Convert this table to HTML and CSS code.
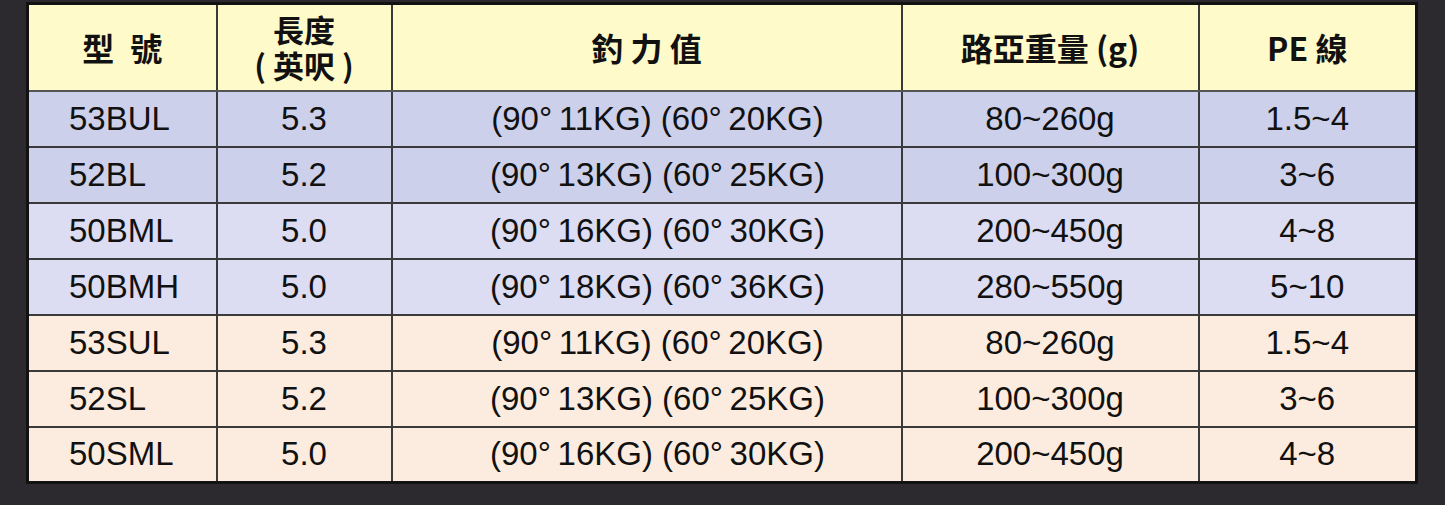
FILE: index.html
```html
<!DOCTYPE html>
<html lang="zh-Hant">
<head>
<meta charset="utf-8">
<link rel="stylesheet" href="styles.css">
</head>
<body>
<table class="spec">
  <colgroup>
    <col class="c1"><col class="c2"><col class="c3"><col class="c4"><col class="c5">
  </colgroup>
  <thead>
    <tr class="head">
      <th>型&ensp;號</th>
      <th class="two">長度<br>(&nbsp;英呎&nbsp;)</th>
      <th>釣 力 值</th>
      <th>路亞重量 (g)</th>
      <th>PE 線</th>
    </tr>
  </thead>
  <tbody>
    <tr class="b1"><td class="model">53BUL</td><td>5.3</td><td class="force">(90°&thinsp;11KG) (60°&thinsp;20KG)</td><td>80~260g</td><td>1.5~4</td></tr>
    <tr class="b1"><td class="model">52BL</td><td>5.2</td><td class="force">(90°&thinsp;13KG) (60°&thinsp;25KG)</td><td>100~300g</td><td>3~6</td></tr>
    <tr class="b2"><td class="model">50BML</td><td>5.0</td><td class="force">(90°&thinsp;16KG) (60°&thinsp;30KG)</td><td>200~450g</td><td>4~8</td></tr>
    <tr class="b2"><td class="model">50BMH</td><td>5.0</td><td class="force">(90°&thinsp;18KG) (60°&thinsp;36KG)</td><td>280~550g</td><td>5~10</td></tr>
    <tr class="s"><td class="model">53SUL</td><td>5.3</td><td class="force">(90°&thinsp;11KG) (60°&thinsp;20KG)</td><td>80~260g</td><td>1.5~4</td></tr>
    <tr class="s"><td class="model">52SL</td><td>5.2</td><td class="force">(90°&thinsp;13KG) (60°&thinsp;25KG)</td><td>100~300g</td><td>3~6</td></tr>
    <tr class="s"><td class="model">50SML</td><td>5.0</td><td class="force">(90°&thinsp;16KG) (60°&thinsp;30KG)</td><td>200~450g</td><td>4~8</td></tr>
  </tbody>
</table>
</body>
</html>
```
FILE: styles.css
```css
html, body {
  margin: 0;
  padding: 0;
  background: #2c2a2f;
}
body {
  padding: 2px 0 0 26px;
  height: 505px;
  box-sizing: border-box;
}
.spec {
  border-collapse: collapse;
  border: 3px solid #121212;
  width: 1389px;
  table-layout: fixed;
  font-family: "Liberation Sans", Arial, "Noto Sans CJK TC", sans-serif;
  color: #111;
}
.c1 { width: 189px; }
.c2 { width: 175px; }
.c3 { width: 510px; }
.c4 { width: 297px; }
.c5 { width: 218px; }
.spec th, .spec td {
  border: 2px solid #3a3a3a;
  text-align: center;
  vertical-align: middle;
  padding: 0;
}
.head {
  height: 87px;
  background: #fffac9;
}
.head th {
  font-family: "Noto Sans CJK TC", "Noto Sans", sans-serif;
  font-weight: 700;
  font-size: 32px;
  line-height: 36px;
  border-bottom: 2px solid #555;
}
.head th.two {
  font-size: 31px;
  line-height: 36px;
}
tbody tr { height: 56px; }
tbody td {
  font-size: 33px;
  line-height: 36px;
}
.spec td.model {
  text-align: left;
  padding-left: 40px;
}
.spec td.force {
  padding-left: 22px;
}
.b1 { background: #cdd0eb; }
.b2 { background: #dcdcf2; }
.s { background: #fcecdf; }
```
